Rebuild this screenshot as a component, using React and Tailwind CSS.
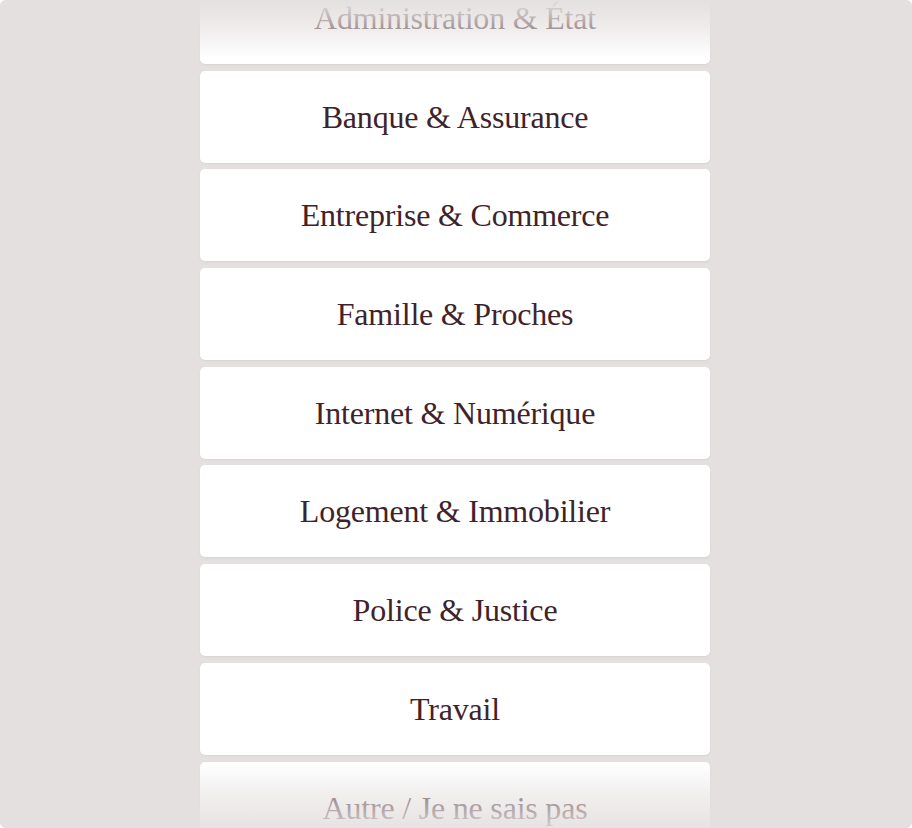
import React from 'react';

const categories = [
  'Administration & État',
  'Banque & Assurance',
  'Entreprise & Commerce',
  'Famille & Proches',
  'Internet & Numérique',
  'Logement & Immobilier',
  'Police & Justice',
  'Travail',
  'Autre / Je ne sais pas',
];

export default function App() {
  return (
    <div className="relative w-[912px] h-[828px] overflow-hidden rounded-[6px] bg-[#e5e0e0]">
      {/* scrolled list */}
      <div className="w-[510px] ml-[200px] -mt-[28px] flex flex-col gap-[6.7px]">
        {categories.map((label) => (
          <button
            key={label}
            className="h-[92px] w-full rounded-[5px] bg-white shadow-[0_1px_2px_rgba(80,50,50,0.08)] flex items-center justify-center text-[32px] text-[#40232a] font-['Liberation_Serif',serif] tracking-[-0.2px]"
          >
            {label}
          </button>
        ))}
      </div>

      {/* fades */}
      <div className="pointer-events-none absolute inset-x-0 top-0 h-[58px] bg-gradient-to-b from-[#e5e0e0] via-[#e5e0e0]/60 to-transparent" />
      <div className="pointer-events-none absolute inset-x-0 bottom-0 h-[64px] bg-gradient-to-t from-[#e5e0e0]/90 via-[#e5e0e0]/55 to-transparent" />
    </div>
  );
}
